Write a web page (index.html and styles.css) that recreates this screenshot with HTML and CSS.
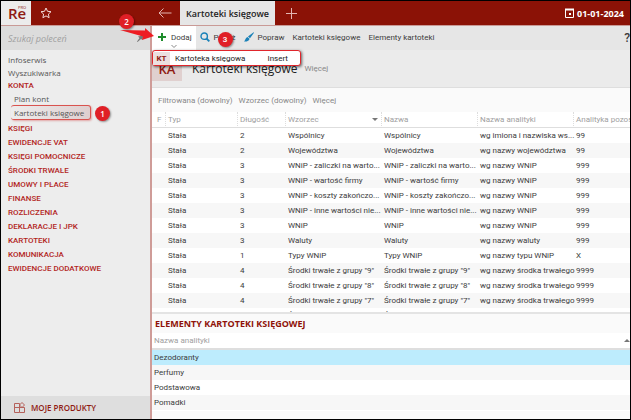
FILE: index.html
```html
<!DOCTYPE html>
<html lang="pl">

<head>
   <meta charset="UTF-8">
   <meta name="viewport" content="width=device-width, initial-scale=1.0">
   <title>Kartoteki księgowe</title>
   <link rel="stylesheet" href="styles.css">
</head>

<body>
   <div class="app">
      <header class="topbar">
         <div class="logo">Re<span class="logo-pro">PRO</span></div>
         <button class="icon-button star" aria-label="Ulubione">
            <svg width="12" height="12" viewBox="0 0 12 12" fill="none" stroke="#f3dcda">
               <path d="M6 1l1.5 3.3 3.5.4-2.6 2.4.7 3.6L6 8.9l-3.1 1.8.7-3.6L1 4.700l3.500-.4z" />
            </svg>
         </button>
         <button class="icon-button back" aria-label="Wstecz">
            <svg width="14" height="10" viewBox="0 0 14 10" fill="none" stroke="#e3b5b1">
               <path d="M13.500 5H1M5.500.5L1 5l4.500 4.500" />
            </svg>
         </button>
         <button class="tab">Kartoteki księgowe</button>
         <button class="icon-button new-tab" aria-label="Nowa karta">
            <svg width="11" height="11" viewBox="0 0 11 11" stroke="#e3b5b1">
               <path d="M5.500 0v11M0 5.500h11" />
            </svg>
         </button>
         <div class="date">
            <svg width="9" height="10" viewBox="0 0 9 10" fill="none" stroke="#fff">
               <path d="M.5 1.500h8v8h-8z" />
               <path d="M0 1.500h9" stroke-width="2" />
               <path d="M4 6h2" stroke-width="2" />
            </svg>
            01-01-2024
         </div>
         <span class="badge badge-2">2</span>
      </header>

      <div class="content">
         <aside class="sidebar">
            <div class="search">
               <input type="text" placeholder="Szukaj poleceń" aria-label="Szukaj poleceń">
               <svg width="7" height="8" viewBox="0 0 7 8" fill="#777">
                  <path d="M4 0l3 3-1 .5-.5 2.500L4 5 .5 8 0 7.500 2.500 4 1 2.500l2.500-.5z" />
               </svg>
            </div>
            <nav class="menu">
               <a href="#" class="item">Infoserwis</a>
               <a href="#" class="item">Wyszukiwarka</a>
               <a href="#" class="item open">KONTA</a>
               <a href="#" class="item sub">Plan kont</a>
               <a href="#" class="item active">Kartoteki księgowe<span class="badge badge-1">1</span></a>
               <a href="#" class="group">KSIĘGI</a>
               <a href="#" class="group">EWIDENCJE VAT</a>
               <a href="#" class="group">KSIĘGI POMOCNICZE</a>
               <a href="#" class="group">ŚRODKI TRWAŁE</a>
               <a href="#" class="group">UMOWY I PŁACE</a>
               <a href="#" class="group">FINANSE</a>
               <a href="#" class="group">ROZLICZENIA</a>
               <a href="#" class="group">DEKLARACJE I JPK</a>
               <a href="#" class="group">KARTOTEKI</a>
               <a href="#" class="group">KOMUNIKACJA</a>
               <a href="#" class="group">EWIDENCJE DODATKOWE</a>
            </nav>
            <button class="products">
               <svg width="11" height="11" viewBox="0 0 11 11" fill="none" stroke="#b5615b">
                  <path d="M.5 1.500h5v9h-5zM.5 5.500h10v5H5.500M8 .5l2.500 2.500L8 5.500 5.500 3z" />
               </svg>
               MOJE PRODUKTY
            </button>
         </aside>

         <main class="main">
            <div class="toolbar">
               <button class="tool add">
                  <svg width="10" height="10" viewBox="0 0 10 10" stroke="#1e8c2b" stroke-width="2">
                     <path d="M5 1v8M1 5h8" />
                  </svg>
                  Dodaj
                  <svg class="chevron" width="6" height="3" viewBox="0 0 6 3" fill="none" stroke="#888">
                     <path d="M.5 0L3 2.500 5.500 0" />
                  </svg>
               </button>
               <button class="tool show">
                  <svg width="10" height="10" viewBox="0 0 10 10" fill="none" stroke="#1b82b8">
                     <circle cx="4.200" cy="4.200" r="3.200" stroke-width="1.400" />
                     <path d="M6.500 6.500L9.300 9.300" stroke-width="1.800" />
                  </svg>
                  Pokaż
                  <span class="badge badge-3">3</span>
               </button>
               <button class="tool edit">
                  <svg width="10" height="10" viewBox="0 0 10 10" fill="#1b82b8">
                     <path d="M9.600.3L10 .8 6 6.200 4 4.500zM3.500 5l2 1.700C5.300 8.800 3 9.800 0 9.500c1.500-.8 1-3.500 3.500-4.500z" />
                  </svg>
                  Popraw
               </button>
               <button class="tool">Kartoteki księgowe</button>
               <button class="tool">Elementy kartoteki</button>
               <button class="help" aria-label="Pomoc">?</button>
               <div class="dropdown">
                  <span class="code">KT</span>
                  <span class="name">Kartoteka księgowa</span>
                  <span class="key">Insert</span>
               </div>
               <svg class="arrow" width="36" height="14" viewBox="0 0 36 14" fill="#ee1c22">
                  <path d="M0 3l25 .5V1l9 8-12 4 1-3.500z" />
               </svg>
            </div>

            <div class="title">
               <span class="tile">KA</span>
               <h1>Kartoteki księgowe</h1>
               <a href="#">Więcej</a>
            </div>

            <div class="filters">
               <a href="#">Filtrowana (dowolny)</a>
               <a href="#">Wzorzec (dowolny)</a>
               <a href="#">Więcej</a>
            </div>

            <div class="grid">
               <table class="data">
                  <colgroup>
                     <col class="col-f">
                     <col class="col-type">
                     <col class="col-length">
                     <col class="col-text">
                     <col class="col-text">
                     <col class="col-text">
                     <col>
                  </colgroup>
                  <thead>
                     <tr>
                        <th>F</th>
                        <th>Typ</th>
                        <th>Długość</th>
                        <th class="sorted">Wzorzec</th>
                        <th>Nazwa</th>
                        <th>Nazwa analityki</th>
                        <th>Analityka pozostała</th>
                     </tr>
                  </thead>
                  <tbody>
                     <tr><td></td><td>Stała</td><td>2</td><td>Wspólnicy</td><td>Wspólnicy</td><td>wg imiona i nazwiska ws...</td><td>99</td></tr>
                     <tr><td></td><td>Stała</td><td>2</td><td>Województwa</td><td>Województwa</td><td>wg nazwy województwa</td><td>99</td></tr>
                     <tr><td></td><td>Stała</td><td>3</td><td>WNiP - zaliczki na warto...</td><td>WNiP - zaliczki na warto...</td><td>wg nazwy WNiP</td><td>999</td></tr>
                     <tr><td></td><td>Stała</td><td>3</td><td>WNiP - wartość firmy</td><td>WNiP - wartość firmy</td><td>wg nazwy WNiP</td><td>999</td></tr>
                     <tr><td></td><td>Stała</td><td>3</td><td>WNiP - koszty zakończo...</td><td>WNiP - koszty zakończo...</td><td>wg nazwy WNiP</td><td>999</td></tr>
                     <tr><td></td><td>Stała</td><td>3</td><td>WNiP - inne wartości nie...</td><td>WNiP - inne wartości nie...</td><td>wg nazwy WNiP</td><td>999</td></tr>
                     <tr><td></td><td>Stała</td><td>3</td><td>WNiP</td><td>WNiP</td><td>wg nazwy WNiP</td><td>999</td></tr>
                     <tr><td></td><td>Stała</td><td>3</td><td>Waluty</td><td>Waluty</td><td>wg nazwy waluty</td><td>999</td></tr>
                     <tr><td></td><td>Stała</td><td>1</td><td>Typy WNiP</td><td>Typy WNiP</td><td>wg nazwy typu WNiP</td><td>X</td></tr>
                     <tr><td></td><td>Stała</td><td>4</td><td>Środki trwałe z grupy "9"</td><td>Środki trwałe z grupy "9"</td><td>wg nazwy środka trwałego</td><td>9999</td></tr>
                     <tr><td></td><td>Stała</td><td>4</td><td>Środki trwałe z grupy "8"</td><td>Środki trwałe z grupy "8"</td><td>wg nazwy środka trwałego</td><td>9999</td></tr>
                     <tr><td></td><td>Stała</td><td>4</td><td>Środki trwałe z grupy "7"</td><td>Środki trwałe z grupy "7"</td><td>wg nazwy środka trwałego</td><td>9999</td></tr>
                     <tr><td></td><td>Stała</td><td>4</td><td>Środki trwałe z grupy "6"</td><td>Środki trwałe z grupy "6"</td><td>wg nazwy środka trwałego</td><td>9999</td></tr>
                  </tbody>
               </table>
            </div>

            <section class="details">
               <h2>ELEMENTY KARTOTEKI KSIĘGOWEJ</h2>
               <table class="elements">
                  <thead>
                     <tr><th class="ascending">Nazwa analityki</th></tr>
                  </thead>
                  <tbody>
                     <tr class="selected"><td>Dezodoranty</td></tr>
                     <tr><td>Perfumy</td></tr>
                     <tr><td>Podstawowa</td></tr>
                     <tr><td>Pomadki</td></tr>
                  </tbody>
               </table>
            </section>
         </main>
      </div>
   </div>
</body>

</html>
```

FILE: styles.css
```css
* {
   box-sizing: border-box;
}

body {
   margin: 0;
   font-family: "Open Sans", "Noto Sans", sans-serif;
   font-size: 8px;
   line-height: 13px;
   color: #3c3c3c;
}

a {
   color: inherit;
   text-decoration: none;
}

button {
   margin: 0;
   padding: 0;
   border: none;
   background: none;
   font: inherit;
   color: inherit;
   white-space: nowrap;
   cursor: pointer;
}

svg {
   display: block;
   flex-shrink: 0;
}

.app {
   display: flex;
   flex-direction: column;
   height: 100vh;
   border: 1px solid #000;
   overflow: hidden;
}

/* Top bar */
.topbar {
   position: relative;
   display: flex;
   flex-shrink: 0;
   height: 25px;
   background-color: #8b1206;
   border-bottom: 1px solid #c99a96;
}

.logo {
   position: relative;
   width: 30px;
   padding-left: 7px;
   background-color: #ececec;
   font-size: 15px;
   font-weight: 600;
   line-height: 24px;
   color: #8f1a12;
}

.logo-pro {
   position: absolute;
   top: 4px;
   left: 17px;
   font-size: 4px;
   font-weight: 400;
   line-height: 5px;
}

.icon-button {
   display: flex;
   align-items: center;
   justify-content: center;
}

.star {
   width: 30px;
}

.back {
   width: 30px;
   margin-left: 89px;
}

.tab {
   width: 95px;
   background-color: #e6e6e6;
   font-size: 9px;
   font-weight: 600;
   color: #222;
}

.new-tab {
   width: 32px;
}

.date {
   display: flex;
   align-items: center;
   gap: 3px;
   margin-left: auto;
   padding-right: 6px;
   font-size: 9px;
   font-weight: 700;
   color: #fff;
}

/* Numbered callouts */
.badge {
   position: absolute;
   z-index: 4;
   width: 15px;
   height: 15px;
   border-radius: 50%;
   background-color: #e01f26;
   box-shadow: 1px 1px 2px rgba(0, 0, 0, 0.4);
   font-weight: 600;
   line-height: 15px;
   text-align: center;
   color: #fff;
}

.badge-1 {
   top: 0;
   left: 84px;
}

.badge-2 {
   top: 13px;
   left: 118px;
}

.badge-3 {
   top: 6px;
   left: 22px;
}

.content {
   display: flex;
   flex: 1;
   min-height: 0;
}

/* Sidebar */
.sidebar {
   display: flex;
   flex-direction: column;
   flex-shrink: 0;
   width: 151px;
   border-right: 2px solid #cf9c98;
   background-color: #ededed;
}

.search {
   display: flex;
   align-items: center;
   height: 24px;
   padding: 0 6px 0 7px;
   background-color: #dcdcdc;
}

.search input {
   flex: 1;
   min-width: 0;
   padding: 0;
   border: none;
   outline: none;
   background: none;
   font: inherit;
   font-size: 9px;
   font-style: italic;
}

.search input::placeholder {
   color: #a0a0a0;
}

.menu {
   display: flex;
   flex-direction: column;
   flex: 1;
   padding-top: 3px;
}

.item {
   padding-left: 7px;
   color: #555;
}

.open,
.group {
   padding-left: 7px;
   font-family: Roboto, sans-serif;
   font-weight: 500;
   color: #b3261e;
}

.group {
   line-height: 14px;
}

.sub {
   padding-left: 13px;
}

.active {
   position: relative;
   width: 80px;
   margin: 0 0 2px 10px;
   padding-left: 3px;
   border: 1px solid #d9534f;
   border-left: none;
   border-radius: 3px;
   background: linear-gradient(90deg, #ededed, #dfcfcf);
   box-shadow: 1px 1px 2px rgba(200, 0, 0, 0.3);
   white-space: nowrap;
}

.products {
   display: flex;
   align-items: center;
   gap: 6px;
   height: 23px;
   padding-left: 13px;
   background-color: #dedede;
   font-weight: 600;
   color: #8f1a12;
}

/* Main area */
.main {
   display: flex;
   flex-direction: column;
   flex: 1;
   min-width: 0;
   background-color: #fafafa;
   font-family: Roboto, sans-serif;
}

.toolbar {
   position: relative;
   display: flex;
   flex-shrink: 0;
   height: 24px;
   background-color: #e6e6e6;
}

.tool {
   position: relative;
   display: flex;
   align-items: center;
   gap: 4px;
   padding: 0 4px 2px;
}

.add {
   padding-left: 5px;
   background-color: #fff;
}

.chevron {
   position: absolute;
   bottom: 2px;
   left: 19px;
}

.help {
   margin-left: auto;
   font-size: 12px;
   font-weight: 500;
}

.dropdown {
   position: absolute;
   z-index: 2;
   top: 24px;
   left: 0;
   display: flex;
   align-items: center;
   width: 149px;
   height: 16px;
   border: 1px solid #e0262c;
   border-radius: 3px;
   background-color: #fff;
   box-shadow: 1px 1px 3px rgba(0, 0, 0, 0.6);
   color: #222;
}

.code {
   width: 17px;
   background-color: #ece0e0;
   font-weight: 700;
   text-align: center;
   color: #8f1a12;
}

.name {
   flex: 1;
   padding-left: 5px;
}

.key {
   padding-right: 12px;
}

.arrow {
   position: absolute;
   z-index: 3;
   top: 1px;
   left: -32px;
}

.title {
   display: flex;
   align-items: center;
   flex-shrink: 0;
   height: 38px;
   border-bottom: 1px solid #dedede;
   background-color: #ebebeb;
   color: #888;
}

.tile {
   width: 30px;
   background-color: #e0d0cf;
   font-family: "Open Sans", sans-serif;
   font-size: 13px;
   font-weight: 600;
   line-height: 24px;
   text-align: center;
   color: #8f1a12;
}

.title h1 {
   margin: 0 7px 0 10px;
   font-family: "Open Sans", sans-serif;
   font-size: 12px;
   font-weight: 400;
   color: #222;
}

.filters {
   display: flex;
   align-items: center;
   flex-shrink: 0;
   gap: 6px;
   height: 24px;
   padding-left: 6px;
   color: #888;
}

/* Tables */
table {
   width: 100%;
   border-collapse: separate;
   border-spacing: 0;
   table-layout: fixed;
   background-color: #fff;
}

th,
td {
   height: 15px;
   padding: 0 0 0 3px;
   text-align: left;
   white-space: nowrap;
}

th {
   height: 16px;
   border-bottom: 1px solid #dedede;
   font-weight: 400;
   color: #a0a0a0;
}

tbody tr:nth-child(even) {
   background-color: #f7f7f7;
}

.grid {
   flex: 1;
   min-height: 0;
   overflow: hidden;
}

.data th + th {
   border-left: 1px dotted #ddd;
   padding-left: 2px;
}

.data th:first-child {
   padding-left: 5px;
}

.sorted::after,
.ascending::after {
   content: "";
   float: right;
   margin: 5px 3px 0 0;
   border: 3px solid transparent;
   border-top-color: #777;
   border-bottom: none;
}

.ascending::after {
   margin-right: 0;
   border-top: none;
   border-bottom: 3px solid #777;
}

.col-f {
   width: 13px;
}

.col-type {
   width: 72px;
}

.col-length {
   width: 48px;
}

.col-text {
   width: 96px;
}

.details {
   flex-shrink: 0;
   padding-bottom: 8px;
   border-top: 2px solid #e4e4e4;
}

.details h2 {
   margin: 0;
   padding-left: 3px;
   font-family: "Open Sans", sans-serif;
   font-size: 9px;
   font-weight: 700;
   line-height: 19px;
   color: #8f1209;
}

.elements {
   border-bottom: 1px solid #fff;
}

.elements th,
.elements td {
   padding-left: 2px;
}

.elements th {
   height: 17px;
   border-bottom-width: 2px;
}

.selected {
   background-color: #bdecfd;
}
```
